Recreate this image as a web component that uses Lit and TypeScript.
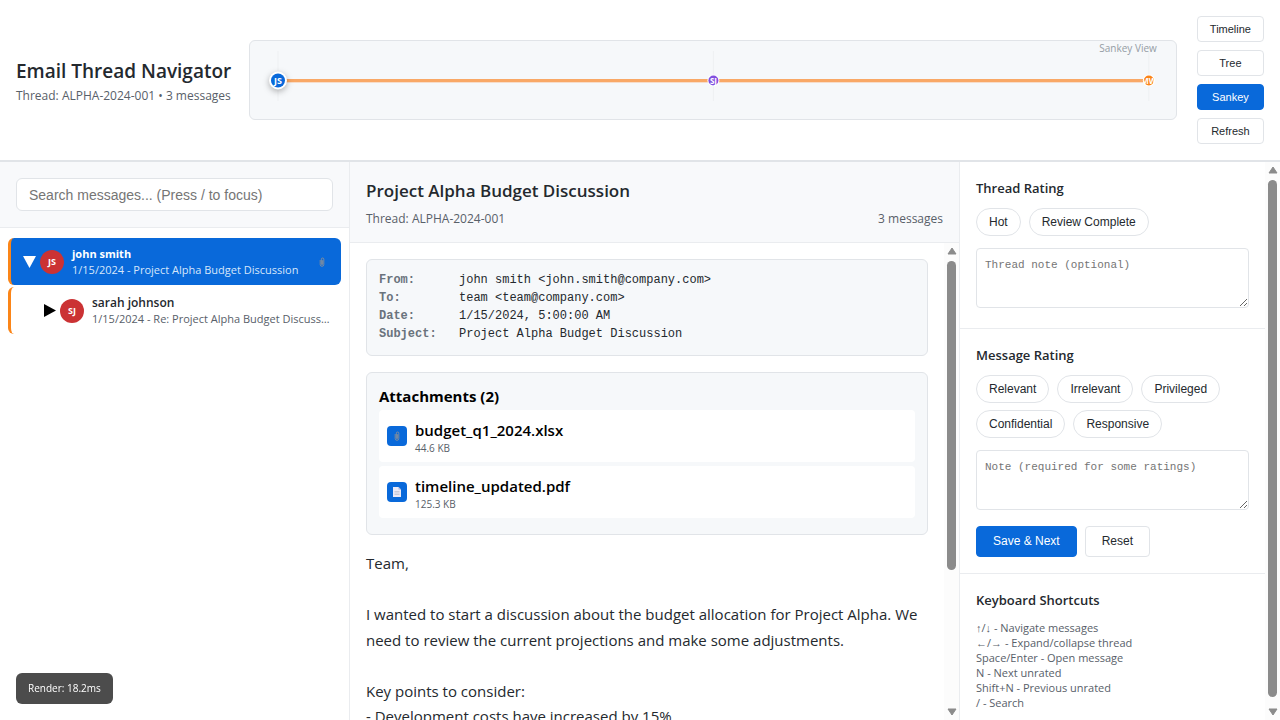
import { LitElement, html, svg, css } from "lit";
import { customElement, property } from "lit/decorators.js";
import { classMap } from "lit/directives/class-map.js";

const paperclip = html`<svg class="clip" viewBox="0 0 6 12" width="6" height="12" aria-hidden="true">
  <path d="M1.2 4v4.5a1.8 1.8 0 0 0 3.6 0V3.2a1.2 1.2 0 0 0-2.4 0v5a.6.6 0 0 0 1.2 0V4.2" fill="none" stroke="#8b9097" stroke-width="0.9" />
</svg>`;

const sheet = html`<svg viewBox="0 0 8 10" width="8" height="10" aria-hidden="true">
  <path d="M0 0h5.5L8 2.5V10H0z" fill="#eceaf6" />
  <path d="M5.5 0v2.5H8z" fill="#a9b4dc" />
  <path d="M1.5 4.5h5M1.5 6h5M1.5 7.5h5" stroke="#b9bccb" stroke-width="0.7" />
</svg>`;

@customElement("scroll-rail")
export class ScrollRail extends LitElement {
  @property({ type: Number }) share = 50;

  static styles = css`
    :host {
      display: flex;
      flex-direction: column;
      align-items: center;
      justify-content: space-between;
      flex: 0 0 15px;
      box-sizing: border-box;
      padding: 4px 0;
      gap: 6px;
      background: #fcfcfc;
    }
    .track {
      flex: 1;
      width: 9px;
      min-height: 0;
    }
    .thumb {
      border-radius: 5px;
      background: #8b8b8b;
    }
    svg {
      display: block;
      flex: none;
    }
  `;

  render() {
    return html`
      <svg width="10" height="8" viewBox="0 0 10 8"><path d="M5 1 9 7H1z" fill="#8b8b8b" stroke="#8b8b8b" stroke-linejoin="round" /></svg>
      <div class="track"><div class="thumb" style="height:${this.share}%"></div></div>
      <svg width="10" height="8" viewBox="0 0 10 8"><path d="M5 7 9 1H1z" fill="#8b8b8b" stroke="#8b8b8b" stroke-linejoin="round" /></svg>
    `;
  }
}

interface FlowNode {
  initials: string;
  at: number;
  color: string;
  current: boolean;
}

@customElement("thread-flow")
export class ThreadFlow extends LitElement {
  nodes: FlowNode[] = [
    { initials: "JS", at: 0, color: "#0969da", current: true },
    { initials: "SJ", at: 50, color: "#8250df", current: false },
    { initials: "MW", at: 100, color: "#fb8518", current: false },
  ];

  static styles = css`
    :host {
      display: block;
      position: relative;
      box-sizing: border-box;
      height: 80px;
      padding: 0 27px 0 28px;
      border: 1px solid #e1e4e8;
      border-radius: 6px;
      background: #f6f8fa;
    }
    .flow {
      display: block;
      width: 100%;
      height: 78px;
      overflow: visible;
    }
    .mark {
      overflow: visible;
    }
    .lifted {
      filter: drop-shadow(0 2px 3px rgba(0, 0, 0, 0.3));
    }
    .initials {
      font: 700 8px "Open Sans", sans-serif;
      fill: #fff;
      text-anchor: middle;
    }
    .initials.big {
      font-size: 9px;
    }
    .caption {
      position: absolute;
      top: 0;
      right: 19px;
      font-size: 10px;
      line-height: 14px;
      color: #959da5;
    }
  `;

  render() {
    return html`
      <svg class="flow" role="img" aria-label="Message flow">
        ${this.nodes.map((n) => svg`<line x1="${n.at}%" x2="${n.at}%" y1="10" y2="60" stroke="#eef0f2" />`)}
        <line x1="0" x2="100%" y1="40" y2="40" stroke="#fb8c3c" stroke-opacity="0.25" stroke-width="4" />
        <line x1="0" x2="100%" y1="39.5" y2="39.5" stroke="#f9a866" stroke-width="3" />
        ${this.nodes.map(
          (n) => svg`<svg class="mark" x="${n.at}%" y="39.5">
            <circle class=${n.current ? "lifted" : ""} r=${n.current ? 9 : 6} fill="#fff" />
            <circle r=${n.current ? 7 : 5} fill=${n.color} />
            <svg x=${n.current ? -7 : -5} y="-7" width=${n.current ? 14 : 10} height="14">
              <text class=${n.current ? "initials big" : "initials"} x="50%" y="10">${n.initials}</text>
            </svg>
          </svg>`
        )}
      </svg>
      <span class="caption">Sankey View</span>
    `;
  }
}

interface Message {
  sender: string;
  initials: string;
  summary: string;
  selected: boolean;
  child: boolean;
  clip: boolean;
}

@customElement("app-root")
export class AppRoot extends LitElement {
  views = ["Timeline", "Tree", "Sankey", "Refresh"];
  messages: Message[] = [
    { sender: "john smith", initials: "JS", summary: "1/15/2024 - Project Alpha Budget Discussion", selected: true, child: false, clip: true },
    { sender: "sarah johnson", initials: "SJ", summary: "1/15/2024 - Re: Project Alpha Budget Discussion", selected: false, child: true, clip: false },
  ];
  fields = [
    ["From:", "john smith <john.smith@company.com>"],
    ["To:", "team <team@company.com>"],
    ["Date:", "1/15/2024, 5:00:00 AM"],
    ["Subject:", "Project Alpha Budget Discussion"],
  ];
  files = [
    { name: "budget_q1_2024.xlsx", size: "44.6 KB", icon: paperclip },
    { name: "timeline_updated.pdf", size: "125.3 KB", icon: sheet },
  ];
  shortcuts = [
    "↑/↓ - Navigate messages",
    "←/→ - Expand/collapse thread",
    "Space/Enter - Open message",
    "N - Next unrated",
    "Shift+N - Previous unrated",
    "/ - Search",
  ];

  static styles = css`
    :host {
      display: flex;
      flex-direction: column;
      height: 100vh;
      overflow: hidden;
      background: #fff;
      color: #24292e;
      font-family: "Open Sans", "Noto Sans", sans-serif;
      font-size: 12px;
    }
    * {
      box-sizing: border-box;
    }
    h1, h2, h3, p, dl, dd, ul {
      margin: 0;
      padding: 0;
    }
    button, input {
      font-family: "Liberation Sans", Arial, sans-serif;
    }
    .top {
      display: grid;
      grid-template-columns: 213px minmax(0, 1fr) auto;
      align-items: center;
      gap: 20px;
      padding: 16px;
      border-bottom: 2px solid #e1e4e8;
    }
    .brand {
      padding-top: 2px;
      white-space: nowrap;
    }
    .title {
      font-size: 19px;
      font-weight: 600;
      line-height: 26px;
    }
    .meta {
      font-size: 12px;
      line-height: 16px;
      color: #586069;
    }
    .brand .meta {
      margin-top: 4px;
    }
    .views {
      display: flex;
      flex-direction: column;
      gap: 8px;
    }
    .btn {
      border: 1px solid #e1e4e8;
      border-radius: 4px;
      background: #fff;
      color: #24292e;
      padding: 0 12px;
      height: 26px;
      font-size: 11px;
      font-weight: 500;
    }
    .btn.primary {
      background: #0969da;
      border-color: #0969da;
      color: #fff;
    }
    .btn.large {
      height: 31px;
      padding: 0 16px 2px;
      font-size: 12px;
    }
    .main {
      flex: 1;
      min-height: 0;
      display: grid;
      grid-template-columns: 350px minmax(0, 1fr) 320px;
    }
    .side {
      border-right: 1px solid #eaecef;
    }
    .search {
      padding: 16px;
      background: #f8f9fb;
      border-bottom: 1px solid #eaecef;
    }
    .search input {
      display: block;
      width: 100%;
      height: 33px;
      padding: 0 12px;
      border: 1px solid #e1e4e8;
      border-radius: 6px;
      background: #fff;
      font-size: 14px;
    }
    input::placeholder, textarea::placeholder {
      color: #757575;
    }
    .tree {
      display: flex;
      flex-direction: column;
      gap: 2px;
      padding: 10px 8px;
      list-style: none;
    }
    .row {
      display: flex;
      align-items: center;
      height: 47px;
      padding: 0 16px 0 8px;
      border-left: 3px solid #fb8518;
      border-radius: 6px;
    }
    .row.child {
      padding-left: 28px;
      padding-right: 10px;
    }
    .row.selected {
      background: #0969da;
      color: #fff;
    }
    .toggle {
      flex: 0 0 21px;
      display: flex;
      justify-content: center;
      padding: 0;
      border: 0;
      background: none;
      color: #000;
    }
    .selected .toggle {
      color: #fff;
    }
    .avatar {
      flex: 0 0 24px;
      height: 24px;
      margin-right: 8px;
      border-radius: 50%;
      background: #cb3234;
      color: #fff;
      font-size: 9px;
      font-weight: 700;
      line-height: 24px;
      text-align: center;
    }
    .info {
      flex: 1;
      min-width: 0;
    }
    .sender {
      font-size: 12px;
      font-weight: 600;
      line-height: 16px;
    }
    .selected .sender {
      font-size: 11px;
      font-weight: 700;
    }
    .summary {
      font-size: 11px;
      line-height: 15px;
      color: #586069;
      white-space: nowrap;
      overflow: hidden;
      text-overflow: ellipsis;
    }
    .selected .summary {
      color: #d6e6fa;
    }
    .reader {
      display: flex;
      flex-direction: column;
      min-height: 0;
      border-right: 1px solid #eaecef;
    }
    .reader-head {
      padding: 17px 16px 15px;
      background: #f8f9fb;
      border-bottom: 1px solid #eaecef;
    }
    .subject {
      margin-bottom: 8px;
      font-size: 17px;
      font-weight: 600;
      line-height: 24px;
    }
    .split {
      display: flex;
      justify-content: space-between;
    }
    .scroller {
      flex: 1;
      min-height: 0;
      display: flex;
    }
    .content {
      flex: 1;
      min-width: 0;
      padding: 16px;
      overflow: hidden;
    }
    .card {
      margin-bottom: 16px;
      padding: 12px;
      border: 1px solid #e1e4e8;
      border-radius: 6px;
      background: #f6f8fa;
    }
    .fields {
      padding-top: 11px;
    }
    .field {
      display: flex;
      font-family: "Liberation Mono", monospace;
      font-size: 12px;
      line-height: 18px;
    }
    .field dt {
      flex: 0 0 80px;
      font-weight: 700;
      color: #6a737d;
    }
    .files-title {
      margin-bottom: 2px;
      font-size: 15px;
      font-weight: 700;
      line-height: 23px;
      color: #000;
    }
    .file {
      display: flex;
      align-items: center;
      gap: 8px;
      height: 52px;
      margin-bottom: 4px;
      padding: 8px;
      border-radius: 4px;
      background: #fff;
    }
    .file-icon {
      display: flex;
      align-items: center;
      justify-content: center;
      width: 20px;
      height: 20px;
      border-radius: 4px;
      background: #0969da;
    }
    .file-name {
      font-size: 15px;
      font-weight: 600;
      line-height: 24px;
      color: #000;
    }
    .file-size {
      font-size: 10px;
      line-height: 12px;
      color: #586069;
    }
    .body {
      font-size: 15px;
      line-height: 1.7;
      white-space: pre-wrap;
    }
    .panel {
      display: flex;
      min-height: 0;
    }
    .sections {
      flex: 1;
      min-width: 0;
      overflow: hidden;
    }
    .section {
      padding: 16px;
      border-bottom: 1px solid #eaecef;
    }
    .section:first-child {
      padding-bottom: 20px;
    }
    .section-title {
      margin-bottom: 10px;
      font-size: 13px;
      font-weight: 600;
      line-height: 20px;
    }
    .pills {
      display: flex;
      flex-wrap: wrap;
      gap: 7px 8px;
      margin-bottom: 12px;
    }
    .pill {
      height: 28px;
      padding: 0 12px;
      border: 1px solid #e1e4e8;
      border-radius: 16px;
      background: #fff;
      color: #24292e;
      font-size: 12px;
    }
    textarea {
      display: block;
      width: 100%;
      height: 60px;
      padding: 8px;
      border: 1px solid #e1e4e8;
      border-radius: 4px;
      background: #fff;
      font-family: "Liberation Mono", monospace;
      font-size: 11px;
      line-height: 16px;
      resize: vertical;
    }
    .actions {
      display: flex;
      gap: 8px;
      margin-top: 16px;
    }
    .keys {
      list-style: none;
      font-size: 11px;
      line-height: 15px;
      color: #586069;
    }
    .timing {
      position: fixed;
      left: 16px;
      bottom: 16px;
      padding: 8px 12px;
      border-radius: 6px;
      background: rgba(0, 0, 0, 0.7);
      color: #fff;
      font-size: 10px;
      font-weight: 500;
      line-height: 15px;
    }
  `;

  private pills(names: string[]) {
    return html`<div class="pills">${names.map((n) => html`<button class="pill">${n}</button>`)}</div>`;
  }

  private arrow(open: boolean) {
    return open
      ? html`<svg width="13" height="12" viewBox="0 0 13 12"><path d="M0 0h13L6.5 12z" fill="currentColor" /></svg>`
      : html`<svg width="12" height="13" viewBox="0 0 12 13"><path d="M0 0v13L12 6.5z" fill="currentColor" /></svg>`;
  }

  render() {
    return html`
      <header class="top">
        <div class="brand">
          <h1 class="title">Email Thread Navigator</h1>
          <p class="meta">Thread: ALPHA-2024-001 • 3 messages</p>
        </div>
        <thread-flow></thread-flow>
        <nav class="views">
          ${this.views.map((v) => html`<button class=${classMap({ btn: true, primary: v === "Sankey" })}>${v}</button>`)}
        </nav>
      </header>
      <div class="main">
        <aside class="side">
          <div class="search">
            <input type="text" aria-label="Search messages" placeholder="Search messages... (Press / to focus)" />
          </div>
          <ul class="tree">
            ${this.messages.map(
              (m) => html`<li class=${classMap({ row: true, selected: m.selected, child: m.child })}>
                <button class="toggle" aria-label="Toggle replies">${this.arrow(m.selected)}</button>
                <span class="avatar">${m.initials}</span>
                <div class="info">
                  <div class="sender">${m.sender}</div>
                  <div class="summary">${m.summary}</div>
                </div>
                ${m.clip ? paperclip : ""}
              </li>`
            )}
          </ul>
        </aside>
        <main class="reader">
          <div class="reader-head">
            <h2 class="subject">Project Alpha Budget Discussion</h2>
            <div class="split meta"><span>Thread: ALPHA-2024-001</span><span>3 messages</span></div>
          </div>
          <div class="scroller">
            <div class="content">
              <dl class="card fields">
                ${this.fields.map(([k, v]) => html`<div class="field"><dt>${k}</dt><dd>${v}</dd></div>`)}
              </dl>
              <div class="card">
                <h3 class="files-title">Attachments (2)</h3>
                ${this.files.map(
                  (f) => html`<div class="file">
                    <span class="file-icon">${f.icon}</span>
                    <div>
                      <div class="file-name">${f.name}</div>
                      <div class="file-size">${f.size}</div>
                    </div>
                  </div>`
                )}
              </div>
              <div class="body">${"Team,\n\nI wanted to start a discussion about the budget allocation for Project Alpha. We need to review the current projections and make some adjustments.\n\nKey points to consider:\n- Development costs have increased by 15%"}</div>
            </div>
            <scroll-rail .share=${70}></scroll-rail>
          </div>
        </main>
        <aside class="panel">
          <div class="sections">
            <section class="section">
              <h3 class="section-title">Thread Rating</h3>
              ${this.pills(["Hot", "Review Complete"])}
              <textarea aria-label="Thread note" placeholder="Thread note (optional)"></textarea>
            </section>
            <section class="section">
              <h3 class="section-title">Message Rating</h3>
              ${this.pills(["Relevant", "Irrelevant", "Privileged", "Confidential", "Responsive"])}
              <textarea aria-label="Message note" placeholder="Note (required for some ratings)"></textarea>
              <div class="actions">
                <button class="btn large primary">Save &amp; Next</button>
                <button class="btn large">Reset</button>
              </div>
            </section>
            <section class="section">
              <h3 class="section-title">Keyboard Shortcuts</h3>
              <ul class="keys">
                ${this.shortcuts.map((s) => html`<li>${s}</li>`)}
              </ul>
            </section>
          </div>
          <scroll-rail .share=${99}></scroll-rail>
        </aside>
      </div>
      <div class="timing">Render: 18.2ms</div>
    `;
  }
}
